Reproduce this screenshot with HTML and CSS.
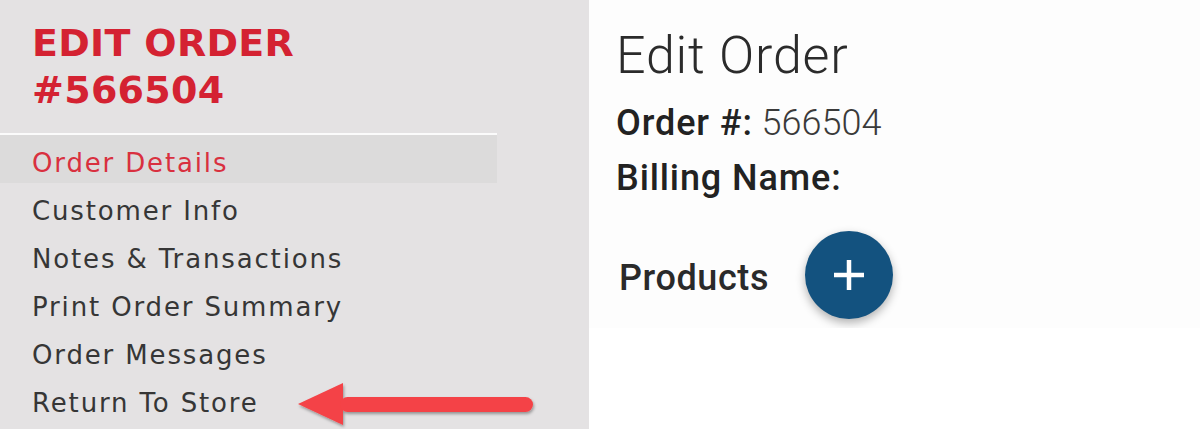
FILE: index.html
```html
<!DOCTYPE html>
<html lang="en">

<head>
    <meta charset="UTF-8">
    <meta name="viewport" content="width=device-width, initial-scale=1.0">
    <title>Edit Order #566504</title>
    <link rel="stylesheet" href="styles.css">
</head>

<body>
    <!-- Left sidebar -->
    <aside class="sidebar">
        <h2 class="sidebar-title">EDIT ORDER<br>#566504</h2>
        <ul class="side-nav">
            <li class="active"><a href="#">Order Details</a></li>
            <li><a href="#">Customer Info</a></li>
            <li><a href="#">Notes &amp; Transactions</a></li>
            <li><a href="#">Print Order Summary</a></li>
            <li><a href="#">Order Messages</a></li>
            <li class="return-item">
                <a href="#">Return To Store</a>
                <!-- callout arrow -->
                <svg class="callout-arrow" width="250" height="60" viewBox="0 0 250 60">
                    <defs>
                        <filter id="arrowShadow" x="-10%" y="-30%" width="120%" height="160%">
                            <feDropShadow dx="1" dy="2" stdDeviation="1.5" flood-color="#000" flood-opacity="0.35"/>
                        </filter>
                    </defs>
                    <g filter="url(#arrowShadow)" fill="#f44346">
                        <polygon points="8,29 53,8 53,50"/>
                        <rect x="50" y="22" width="193" height="15" rx="7.5"/>
                    </g>
                </svg>
            </li>
        </ul>
    </aside>

    <!-- Main content -->
    <main class="content">
        <div class="panel">
            <h1 class="page-title">Edit Order</h1>
            <p class="info-row"><strong>Order #:</strong> 566504</p>
            <p class="info-row"><strong>Billing Name:</strong></p>
            <div class="products-row">
                <span class="products-label">Products</span>
                <button class="fab" type="button" aria-label="Add product">
                    <svg width="32" height="32" viewBox="0 0 32 32">
                        <path d="M16 1 V31 M1 16 H31" stroke="#fff" stroke-width="4.5" fill="none"/>
                    </svg>
                </button>
            </div>
        </div>
    </main>
</body>

</html>
```

FILE: styles.css
```css
/* Page layout */
body {
    margin: 0;
    height: 429px;
    display: flex;
    background-color: #fff;
    overflow: hidden;
}

/* Sidebar */
.sidebar {
    width: 589px;
    flex-shrink: 0;
    background-color: #e4e2e3;
    font-family: 'DejaVu Sans', Verdana, sans-serif;
}

.sidebar-title {
    margin: 0;
    padding: 20px 32px 19px;
    font-size: 38px;
    line-height: 47px;
    font-weight: bold;
    color: #d42232;
    letter-spacing: 0.3px;
}

.side-nav {
    list-style: none;
    margin: 0;
    padding: 0;
    width: 497px;
    border-top: 2px solid #fbfbfb;
}

.side-nav li {
    height: 48px;
    box-sizing: border-box;
    padding: 8px 0 0 32px;
    display: flex;
    align-items: center;
    position: relative;
}

.side-nav a {
    font-size: 26px;
    color: #363636;
    text-decoration: none;
    letter-spacing: 1.85px;
}

.side-nav li.active {
    background-color: #dcdbdb;
}

.side-nav li.active a {
    color: #d9303f;
}

.callout-arrow {
    position: absolute;
    left: 290px;
    top: 0;
}

/* Main area */
.content {
    flex: 1;
    font-family: Roboto, 'Noto Sans', sans-serif;
    color: #2a2a2a;
}

.panel {
    height: 328px;
    padding: 25px 0 0 27px;
    box-sizing: border-box;
    overflow: hidden;
    background-color: #fdfdfd;
}

.page-title {
    margin: 0 0 10px;
    font-size: 52px;
    line-height: 61px;
    font-weight: 300;
    color: #2b2b2b;
    letter-spacing: 0.8px;
}

.info-row {
    margin: 0;
    font-size: 36px;
    line-height: 55px;
    font-weight: 300;
    color: #3a3a3a;
}

.info-row strong {
    font-weight: 500;
    color: #222;
    letter-spacing: 0.9px;
}

.products-row {
    display: flex;
    align-items: center;
    gap: 36px;
    margin-top: 25px;
}

.products-label {
    font-size: 36px;
    font-weight: 500;
    color: #2a2a2a;
    letter-spacing: 0.6px;
    margin: 5px 0 0 3px;
}

.fab {
    width: 88px;
    height: 88px;
    border-radius: 50%;
    border: none;
    padding: 0;
    background-color: #13527f;
    display: flex;
    align-items: center;
    justify-content: center;
    box-shadow: 0 4px 10px rgba(0, 0, 0, 0.3);
    cursor: pointer;
}
```
